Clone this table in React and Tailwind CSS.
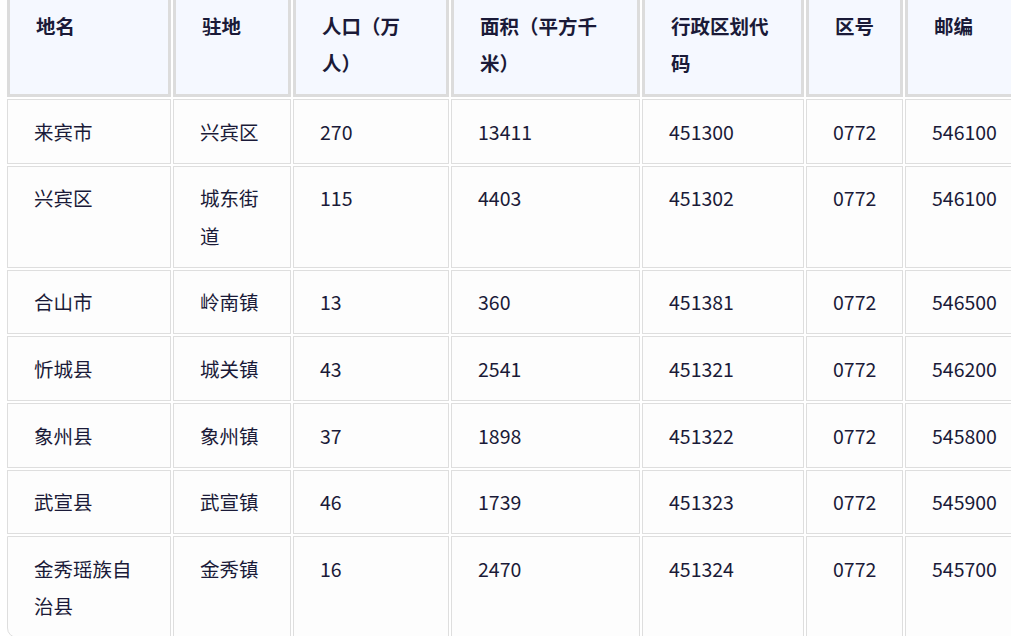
const headers = [
  { label: '地名', w: 'w-[164px]' },
  { label: '驻地', w: 'w-[118px]' },
  { label: '人口（万人）', w: 'w-[156px]' },
  { label: '面积（平方千米）', w: 'w-[189px]' },
  { label: '行政区划代码', w: 'w-[162px]' },
  { label: '区号', w: 'w-[97px]' },
  { label: '邮编', w: 'w-[118px]' },
];

const rows = [
  ['来宾市', '兴宾区', '270', '13411', '451300', '0772', '546100'],
  ['兴宾区', '城东街道', '115', '4403', '451302', '0772', '546100'],
  ['合山市', '岭南镇', '13', '360', '451381', '0772', '546500'],
  ['忻城县', '城关镇', '43', '2541', '451321', '0772', '546200'],
  ['象州县', '象州镇', '37', '1898', '451322', '0772', '545800'],
  ['武宣县', '武宣镇', '46', '1739', '451323', '0772', '545900'],
  ['金秀瑶族自治县', '金秀镇', '16', '2470', '451324', '0772', '545700'],
];

export default function App() {
  return (
    <div className="h-[636px] w-[1011px] overflow-hidden bg-white font-['Noto_Sans_CJK_SC','Noto_Sans',sans-serif] text-[19.5px] leading-[37.33px] text-[#1a1a38]">
      <table className="-mt-[11px] ml-[5px] w-[1020px] table-fixed border-separate border-spacing-[2px]">
        <thead>
          <tr>
            {headers.map((h) => (
              <th
                key={h.label}
                className={`${h.w} border-[3px] border-[#dcdcdc] bg-[#f5f8ff] px-[26px] py-[12.67px] text-left align-top font-semibold`}
              >
                {h.label}
              </th>
            ))}
          </tr>
        </thead>
        <tbody>
          {rows.map((row, ri) => (
            <tr key={row[0]}>
              {row.map((cell, ci) => (
                <td
                  key={ci}
                  className={`border border-[#dedede] bg-[#fdfdfd] px-[26px] py-[12.67px] text-left align-top ${
                    ri === rows.length - 1 && ci === 0 ? 'rounded-bl-[10px]' : ''
                  }`}
                >
                  {cell}
                </td>
              ))}
            </tr>
          ))}
        </tbody>
      </table>
    </div>
  );
}
